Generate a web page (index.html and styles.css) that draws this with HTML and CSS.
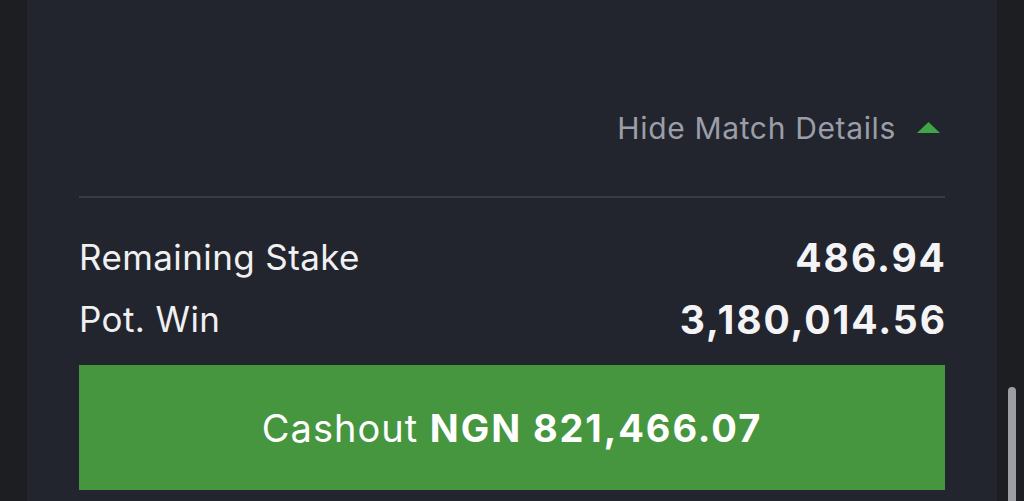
FILE: index.html
```html
<!DOCTYPE html>
<html lang="en">
<head>
<meta charset="utf-8">
<title>Cashout</title>
<link rel="stylesheet" href="styles.css">
</head>
<body>
<div class="page">
  <section class="card">
    <div class="toggle">
      <span class="toggle-label">Hide Match Details</span>
      <svg class="caret" width="23" height="11" viewBox="0 0 23 11"><polygon points="11.5,0 23,11 0,11" fill="#3fa648"/></svg>
    </div>
    <div class="divider"></div>
    <div class="row">
      <span class="label">Remaining Stake</span>
      <span class="value">486.94</span>
    </div>
    <div class="row">
      <span class="label">Pot. Win</span>
      <span class="value">3,180,014.56</span>
    </div>
    <button class="cashout">Cashout <b>NGN 821,466.07</b></button>
  </section>
  <div class="scrollbar"></div>
</div>
</body>
</html>
```

FILE: styles.css
```css
html, body {
  margin: 0;
  padding: 0;
  background: #1d1e22;
  overflow: hidden;
}
body {
  font-family: Inter, "Noto Sans", "Liberation Sans", sans-serif;
  width: 1024px;
  height: 501px;
}
.page {
  position: relative;
  display: flex;
  height: 501px;
  padding-left: 27px;
}
.card {
  width: 970px;
  box-sizing: border-box;
  height: 501px;
  background: #22252d;
  padding: 100px 52px 0 52px;
  display: flex;
  flex-direction: column;
}
.toggle {
  height: 56px;
  display: flex;
  align-items: center;
  justify-content: flex-end;
  gap: 21px;
  padding-right: 5px;
}
.toggle-label {
  font-size: 30px;
  color: #9b9ea8;
  letter-spacing: 0.65px;
}
.caret {
  display: block;
  margin-top: -2px;
}
.divider {
  margin-top: 40px;
  height: 2px;
  background: #383b43;
}
.row {
  height: 62px;
  display: flex;
  align-items: center;
  justify-content: space-between;
}
.divider + .row {
  margin-top: 28px;
}
.row + .row {
  margin-bottom: 2px;
}
.label {
  font-size: 35px;
  color: #f0f0f2;
  letter-spacing: 0.4px;
}
.value {
  font-size: 39px;
  font-weight: 700;
  color: #f4f4f6;
  letter-spacing: 1.9px;
  margin-right: -1.9px;
}
.cashout {
  margin-top: 13px;
  height: 125px;
  border: 0;
  border-radius: 0;
  background: #46963f;
  color: #ffffff;
  font-family: inherit;
  font-size: 38px;
  font-weight: 400;
  letter-spacing: 1px;
  padding: 0;
}
.cashout b {
  font-weight: 700;
  letter-spacing: 1.9px;
}
.scrollbar {
  position: absolute;
  left: 1008px;
  top: 387px;
  width: 8px;
  height: 130px;
  border-radius: 4px;
  background: #9d9ea4;
}
```
